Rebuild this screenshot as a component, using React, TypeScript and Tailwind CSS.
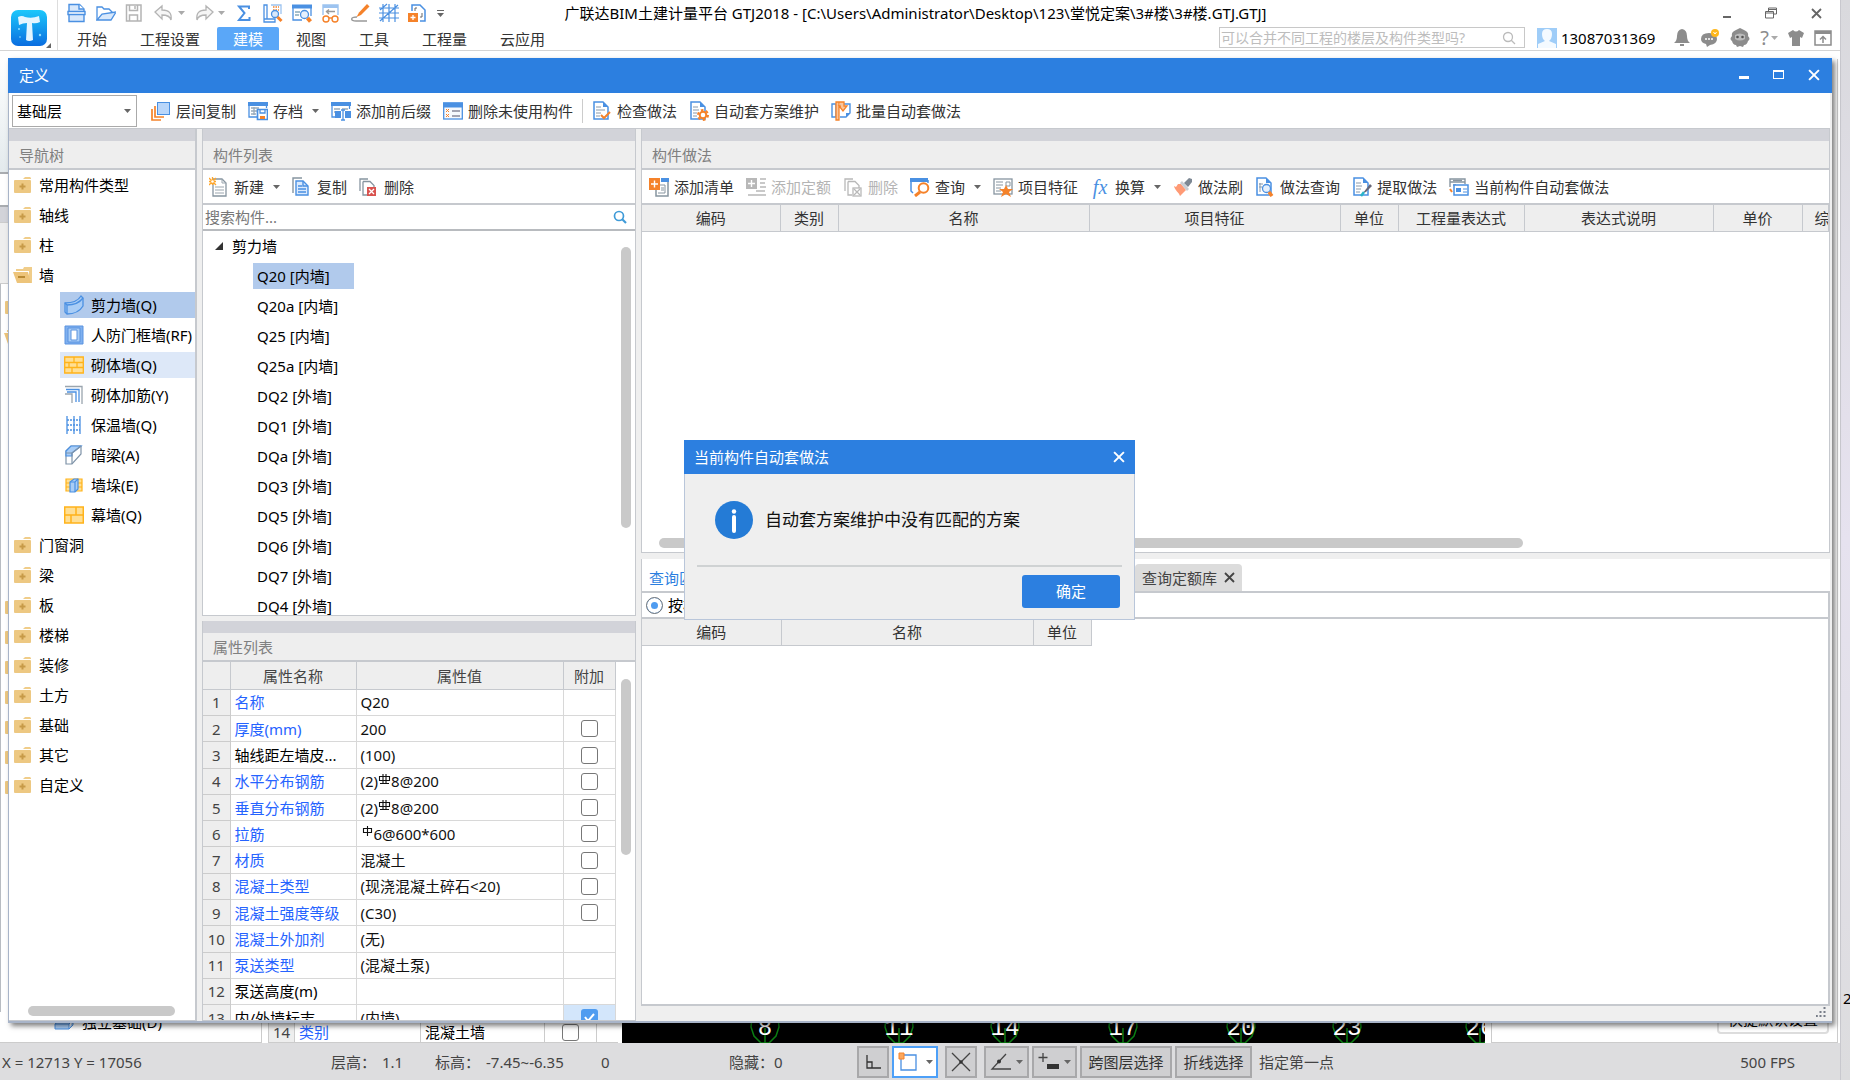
import type { ReactNode } from 'react'

const BLUE = '#4a90e2'
const ORANGE = '#f5822a'

const ICONS: Record<string, ReactNode> = {
  newFile: <g fill="#d8e8fb" stroke={BLUE} strokeWidth="1.4"><path d="M2 8V1.5h10.500L17 6v2M2 12v6.500h15V12" /><path d="M12 1.500V6h5M1 8.500h17v3H1z" fill="#fff" /></g>,
  open: <g fill="#d8e8fb" stroke={BLUE} strokeWidth="1.3"><path d="M1 17V4h5l2 2h5l4 4" fill="#fff" /><path d="M1 17l5-6 14-2-5 8z" /></g>,
  save: <g fill="none" stroke="#b4b4b4" strokeWidth="1.500"><path d="M1.500 2h14.500v16h-14.500z" /><path d="M4.500 2v5.500h8V2M10 3v3M4.500 18v-6h8v6" /></g>,
  undo: <path d="M1 9l7-6v4c7 0 10 3 9 10-1-4-4-5-9-5v4z" fill="#f6f6f6" stroke="#b4b4b4" strokeWidth="1.3" />,
  redo: <path d="M19 9l-7-6v4c-7 0-10 3-9 10 1-4 4-5 9-5v4z" fill="#f6f6f6" stroke="#b4b4b4" strokeWidth="1.3" />,
  sigma: <path d="M15 6V3.500H5l5.500 6.500L5 17h10.500v-3" fill="none" stroke={BLUE} strokeWidth="2" />,
  calcView: <g fill="none" stroke={BLUE} strokeWidth="1.300"><path d="M1 2h3v14H1zM4 16h8v3H1v-3" /><path d="M8 2h10v9" stroke="#9cc3f0" /><path d="M10 4h6M10 7h6" stroke={ORANGE} strokeDasharray="1.500 1" strokeWidth="1.500" /><circle cx="12" cy="11" r="3.500" fill="#d8e8fb" /><path d="M14.500 14l4 4" stroke={ORANGE} strokeWidth="3" /></g>,
  winFind: <g fill="none" stroke={BLUE} strokeWidth="1.300"><path d="M1 3v14h9M19 3v10" /><path d="M0 3.500h20" strokeWidth="4" /><path d="M3 9h5M3 12h4" stroke="#8ab" /><circle cx="12.500" cy="11.500" r="4" fill="#e6f0fc" /><path d="M15.500 15l3 3.500" stroke={ORANGE} strokeWidth="4" /></g>,
  glasses: <g fill="none" stroke="#9cc3f0" strokeWidth="1.400"><path d="M2 12V2h15v10" /><path d="M2 3.500h15" strokeWidth="3" /><path d="M5 8.500h9M8 6.500L5.500 8.500 8 11" stroke="#999" /><circle cx="5" cy="16" r="3" stroke={ORANGE} /><circle cx="14" cy="16" r="3" stroke={ORANGE} /><path d="M8 15h3" stroke={ORANGE} /></g>,
  pencil: <g><path d="M17 1l2.500 2.500L11 12l-4.500 2L9 9.500z" fill={ORANGE} /><path d="M7 14c-7 0-7 4-1 4h11" fill="none" stroke="#999" strokeWidth="1.300" /></g>,
  grid: <path d="M4 1v18M10 1v18M16 1v18M0 5h20M0 10h20M0 15h20M1 18L19 2M1 7L8 1" fill="none" stroke={BLUE} strokeWidth="1.200" />,
  pageAdd: <g><path d="M4 8V2h8l5 5v11h-5" fill="#fff" stroke={BLUE} strokeWidth="1.500" /><path d="M9 5H7v3M14 10v4h-2" stroke="#666" fill="none" /><rect y="10" width="10" height="9" fill={ORANGE} /><path d="M5 12v5M2.500 14.500h5" stroke="#fff" strokeWidth="1.300" /></g>,
  layers: <g><path d="M1 8v11h9M4 5v11h9" fill="none" stroke={ORANGE} strokeWidth="1.700" /><rect x="6.500" y="1.500" width="12" height="12" fill="#b9d6fa" stroke={BLUE} /></g>,
  archive: <g fill="none" stroke={BLUE} strokeWidth="1.300"><path d="M1 3v13h8M18.500 3v4" /><path d="M0 3h20" strokeWidth="4" /><path d="M3 7h8M3 10h6M3 13h5M6 6v8" stroke="#9ab" /><path d="M9.500 8.500h10v10h-10z" fill="#fff" strokeWidth="1.700" /><path d="M12 9v3h5V9" /><path d="M12 16.500h5" stroke={ORANGE} strokeWidth="3" /></g>,
  affix: <g fill="none" stroke={BLUE} strokeWidth="1.300"><path d="M1 3v13h3M18.500 3v5" /><path d="M0 3h20" strokeWidth="4" /><path d="M3 8h6M11 8h6M3 11h5" stroke="#9ab" /><path d="M4 10h6v7H4zM14 10h6v7h-6z" fill={BLUE} stroke="none" /><path d="M10 9h4M12 9v10M10 19h4" /></g>,
  unused: <g fill="none"><rect x=".7" y="2" width="18.600" height="16" fill="#f6f9fd" stroke={BLUE} strokeWidth="1.300" /><path d="M0 4h20" stroke={BLUE} strokeWidth="5" /><path d="M3 8l3 3M6 8l-3 3M3 13l3 3M6 13l-3 3" stroke={ORANGE} /><path d="M9 10h8M9 15h8" stroke="#889" strokeWidth="1.300" /></g>,
  check: <g fill="none"><path d="M2 1h9l5 5v12H2z" fill="#fff" stroke={BLUE} strokeWidth="1.500" /><path d="M11 1v5h5z" fill={BLUE} /><path d="M4 6h5M4 9h9M4 12h5M4 15h4" stroke="#89a" /><path d="M9 14l3 3 6-6" stroke={ORANGE} strokeWidth="2" /></g>,
  gear: <g fill="none"><path d="M2 1h9l5 5v12H2z" fill="#fff" stroke={BLUE} strokeWidth="1.500" /><path d="M11 1v5h5z" fill={BLUE} /><path d="M4 6h5M4 9h6M4 12h4M4 15h4" stroke="#89a" /><circle cx="14" cy="14" r="5" stroke={ORANGE} strokeWidth="2" strokeDasharray="2.600 2.600" /><circle cx="14" cy="14" r="3.300" fill="#fff" stroke={ORANGE} strokeWidth="2" /></g>,
  batch: <g fill="none"><path d="M1 3h4v13H1zM9 3h10v9l-4 4H9" fill="#fff" stroke={BLUE} strokeWidth="1.400" /><path d="M19 12h-4v4z" fill={BLUE} /><path d="M5 1h3v18H5zM8 1h5v4h3l-4 5-4-5h2" fill="#fbc49a" stroke={ORANGE} strokeWidth="1.300" /></g>,
  create: <g fill="none"><path d="M4 2h9l4 4v13H4z" fill="#fff" stroke="#8795a0" strokeWidth="1.300" /><path d="M13 2v4h4M6 10h9M6 13h9M6 16h9" stroke="#9aa5ae" /><path d="M0 1l7 7M7 1L0 8M3.500 0v8M0 4.500h7" stroke="#ffa62b" strokeWidth="1.300" /><circle cx="3.500" cy="4.500" r="1.300" fill="#fff" /></g>,
  copy: <g fill="none" strokeWidth="1.400"><path d="M1 16V1h9" stroke="#8795a0" /><path d="M4 4h7l5 5v9H4z" fill="#dbeafd" stroke={BLUE} /><path d="M11 4v5h5M6 9h4M6 12h8M6 15h8" stroke={BLUE} /></g>,
  remove: <g fill="none" strokeWidth="1.300"><path d="M1 14V2h8M4 4.500h7l4 4V11M4 4.500V18h4" stroke="#8795a0" /><rect x="8" y="10" width="9" height="9" fill="#d9534f" /><path d="M10 12l5 5M15 12l-5 5" stroke="#fff" /></g>,
  removeOff: <g fill="none" strokeWidth="1.300" stroke="#b8b8b8"><path d="M2 14V2h8M5 4.500h7l4 4V11M5 4.500V18h4" /><rect x="10" y="11" width="8" height="8" /><path d="M11 12l6 6M17 12l-6 6" /></g>,
  addList: <g fill="none"><path d="M19 4v15H7v-6" stroke="#8795a0" strokeWidth="1.500" /><path d="M12 3h8" stroke={BLUE} strokeWidth="4" /><path d="M11 8h5v8H9M12 11h3M12 13h3" stroke="#8795a0" /><rect width="11" height="12" y="1" fill={ORANGE} /><path d="M5.500 3.500v7M2 7h7" stroke="#fff" strokeWidth="1.400" /></g>,
  addQuota: <g fill="none"><path d="M14 2h6M14 6h5M14 10h6M10 14h8M2 18h18M14 14h5" stroke="#b8b8b8" strokeWidth="1.400" /><rect width="11" height="11" y="1" fill="#b8b8b8" /><path d="M5.500 3v7M2 6.500h7" stroke="#fff" strokeWidth="1.400" /></g>,
  query: <g fill="none"><path d="M1 3v11l2 2M18 3v3" stroke={BLUE} strokeWidth="1.500" /><path d="M0 3h18" stroke={BLUE} strokeWidth="4" /><circle cx="13.500" cy="11" r="4.800" fill="#fff" stroke={ORANGE} strokeWidth="2" /><path d="M10 15l-5 4" stroke={ORANGE} strokeWidth="3" /></g>,
  feature: <g fill="none"><rect x="1" y="2" width="18" height="15" fill="#fff" stroke="#8795a0" strokeWidth="1.300" /><path d="M3 5h7M3 8h7M3 11h5M3 14h5M13 5h4v4h-4z" stroke="#8795a0" /><path d="M13 8l2 4h5l-4 3 2 5-5-3-5 3 2-5-4-3h5z" fill={ORANGE} /></g>,
  brush: <g><path d="M1 9l2 1 2-3 3 0 5 6-6 6c-1-4-5-5-6-10z" fill="#ff9a75" /><path d="M7 6l2-2 7 8-2 2z" fill="#c9ced4" /><path d="M11 6l5-5 3 1 0 3-4 5z" fill="#7d8894" /></g>,
  docFind: <g fill="none"><path d="M2 1h9l5 5v12H2z" fill="#fff" stroke={BLUE} strokeWidth="1.500" /><path d="M11 1v5h5z" fill={BLUE} /><path d="M5 6v9M4 7h4M4 10h3" stroke="#89a" /><circle cx="11.500" cy="11.500" r="4" fill="#e6f0fc" stroke={BLUE} strokeWidth="1.300" /><path d="M14 15l3 4" stroke={ORANGE} strokeWidth="3.500" /></g>,
  docEdit: <g fill="none"><path d="M2 1h9l5 5v12H2z" fill="#fff" stroke={BLUE} strokeWidth="1.500" /><path d="M11 1v5h5z" fill={BLUE} /><path d="M4 6h5M4 9h6M4 12h5M4 15h4" stroke="#89a" /><path d="M18 7l2 2-6 6-3 1z" fill="#667" /><path d="M12 15l-3 4" stroke="#28b4c8" strokeWidth="2.500" /></g>,
  autoSet: <g fill="none"><path d="M1 10V2h15v5M1 5h15" stroke="#8795a0" strokeWidth="1.400" /><path d="M4 3.500h9M4 8h3" stroke="#8795a0" strokeWidth="1.300" /><path d="M5 8h14v10H5z" fill="#fff" stroke={BLUE} strokeWidth="1.500" /><path d="M7 11h5v4H7z" fill={BLUE} /><path d="M14 12h4M14 15h4" stroke={BLUE} /><path d="M1 12l2 3" stroke={ORANGE} strokeWidth="2" /></g>,
  shearWall: <g fill="#a9cdf6" stroke={BLUE} strokeWidth="1.300"><path d="M1 8c8 0 13-2 16-7l2 2v8c-3 5-8 8-16 8l-2-2z" /><path d="M1 8l2 2c8 0 13-3 16-7M3 10v9" fill="none" /></g>,
  doorFrame: <g fill="#7fb0ef" stroke="#5b93e0"><path d="M1 1h18v18H1z" /><path d="M4 3h12v14H4z" fill="#a9cdf6" /><path d="M7 5h6v10H7z" fill="#fff" /></g>,
  brick: <g stroke="#ffb31a" strokeWidth="1.300" fill="#ffdf94"><path d="M.7 2h18.600v16H.7z" /><path d="M1 7.500h18M1 12.500h18M10 2v5.500M5 7.500v5M13 7.500v5M8 12.500V18" /></g>,
  rebar: <g fill="none" strokeWidth="1.300"><path d="M1 1.500h17V19M1 9h7v9" stroke="#9aa5ae" /><path d="M2 4.500h13V17M3 7h9v10" stroke={BLUE} /></g>,
  insulate: <g fill="none" stroke={BLUE} strokeWidth="1.300"><path d="M3 1v18M10 1v18M16 1v18" /><path d="M3 5h13M3 10h13M3 15h13" strokeDasharray="2 1" /></g>,
  hiddenBeam: <g stroke="#7f93a8" strokeWidth="1.200" fill="#fff"><path d="M2 6l5-5h10v8L8 19H2z" /><path d="M2 6l5-5h10L8 8v3H2z" fill="#a9cdf6" stroke={BLUE} /><path d="M8 8v11M8 8l9-7M2 8h6" fill="none" /></g>,
  pier: <g stroke="#ffb31a" fill="#ffdf94" strokeWidth="1.200"><path d="M2 4h16v12H2zM2 8h16M2 12h16" /><path d="M6 7l4-3h4v10l-3 3H6z" fill="#a9cdf6" stroke={BLUE} /><path d="M11 7v10M6 7h5l3-3" fill="none" stroke={BLUE} /></g>,
  curtain: <g stroke="#ffb31a" strokeWidth="1.500" fill="#ffdf94"><path d="M.7 2h18.600v16H.7z" /><path d="M1 10h18M12 2v8M7 10v8" /></g>,
  footing: <g fill="#a9cdf6" stroke={BLUE}><path d="M1 12l5-4h13l-4 4zM1 12v5h14v-5M15 17l4-4V8M7 8V5h8v3" /></g>,
}

function Icon({ name }: { name: string }) {
  return (
    <svg viewBox="0 0 20 20" className="w-5 h-5 shrink-0" aria-hidden="true">
      {ICONS[name]}
    </svg>
  )
}

function Caret({ color = '#666' }: { color?: string }) {
  return (
    <svg viewBox="0 0 7 4" className="w-[7px] h-1 shrink-0" aria-hidden="true">
      <path d="M0 0h7L3.500 4z" fill={color} />
    </svg>
  )
}

function Cross({ size = 11 }: { size?: number }) {
  return (
    <svg viewBox="0 0 11 11" width={size} height={size} aria-hidden="true">
      <path d="M1 1l9 9M10 1l-9 9" stroke="currentColor" strokeWidth="1.800" />
    </svg>
  )
}

function Folder({ open }: { open?: boolean }) {
  return (
    <svg viewBox="0 0 20 18" className="w-5 h-[18px] shrink-0" aria-hidden="true">
      {open ? (
        <g>
          <path d="M3 5V3h7l1-2h8v16h-3V5z" fill="#f0cd8a" />
          <path d="M0 6h15l3 11H4z" fill="#edc47a" />
          <path d="M5 11h7" stroke="#b98a34" strokeWidth="2" />
        </g>
      ) : (
        <g>
          <path d="M10 3l2-2h5l1 1v1z" fill="#f0cd8a" />
          <rect x="1" y="4" width="17" height="13" rx="1" fill="#edc882" />
          <path d="M9.500 7.500v6M6.500 10.500h6" stroke="#c79a48" strokeWidth="2" />
        </g>
      )}
    </svg>
  )
}

interface ToolProps {
  icon: string
  label: string
  caret?: boolean
  off?: boolean
}

function Tool({ icon, label, caret, off }: ToolProps) {
  return (
    <button disabled={off} className={`flex items-center gap-[5px] h-7 px-1.5 whitespace-nowrap ${off ? 'text-[#b4b4b4]' : 'text-[#333]'}`}>
      {icon === 'fx' ? <i className="w-5 text-center text-xl font-['Liberation_Serif'] text-[#4a90e2]">fx</i> : <Icon name={icon} />}
      {label}
      {caret && <span className="pl-1"><Caret /></span>}
    </button>
  )
}

function PanelTitle({ children }: { children: string }) {
  return (
    <>
      <div className="h-3 shrink-0 bg-[#d2d3d9]" />
      <h2 className="h-[29px] shrink-0 flex items-center px-[10px] bg-[#eeeeee] border-b-2 border-[#c6c9ce] text-[#808080]">{children}</h2>
    </>
  )
}

const QUICK = [
  { icon: 'newFile', label: '新建' }, { icon: 'open', label: '打开' }, { icon: 'save', label: '保存' },
  { icon: 'undo', label: '撤销', caret: true }, { icon: 'redo', label: '恢复', caret: true },
  { icon: 'sigma', label: '汇总计算' }, { icon: 'calcView', label: '查看计算式' }, { icon: 'winFind', label: '查看工程量' },
  { icon: 'glasses', label: '查看报表' }, { icon: 'pencil', label: '绘制' }, { icon: 'grid', label: '轴网' }, { icon: 'pageAdd', label: '新建构件' },
]

const MENUS = ['开始', '工程设置', '建模', '视图', '工具', '工程量', '云应用']

const WALLS = [
  { icon: 'shearWall', label: '剪力墙(Q)' },
  { icon: 'doorFrame', label: '人防门框墙(RF)' },
  { icon: 'brick', label: '砌体墙(Q)' },
  { icon: 'rebar', label: '砌体加筋(Y)' },
  { icon: 'insulate', label: '保温墙(Q)' },
  { icon: 'hiddenBeam', label: '暗梁(A)' },
  { icon: 'pier', label: '墙垛(E)' },
  { icon: 'curtain', label: '幕墙(Q)' },
]

const GROUPS_TOP = ['常用构件类型', '轴线', '柱', '墙']
const GROUPS_BOTTOM = ['门窗洞', '梁', '板', '楼梯', '装修', '土方', '基础', '其它', '自定义']

const COMPONENTS = [
  'Q20 [内墙]', 'Q20a [内墙]', 'Q25 [内墙]', 'Q25a [内墙]', 'DQ2 [外墙]', 'DQ1 [外墙]',
  'DQa [外墙]', 'DQ3 [外墙]', 'DQ5 [外墙]', 'DQ6 [外墙]', 'DQ7 [外墙]', 'DQ4 [外墙]',
]

interface Prop {
  name: string
  value: ReactNode
  plain?: boolean
  box?: boolean
  on?: boolean
}

// Steel grade marks: plain bar (HPB300) and ribbed bar (HRB400)
function BarMark({ ribbed }: { ribbed?: boolean }) {
  return (
    <svg viewBox="0 0 13 13" className="inline w-[13px] h-[13px] -mt-2" aria-label={ribbed ? 'HRB400' : 'HPB300'}>
      <path d={ribbed ? 'M1.500 3.500h10v4h-10zM2 10.500h9M5 1v9M8 1v9' : 'M2.500 3.500h8v4h-8zM6.500 1v10'} fill="none" stroke="#111" strokeWidth="1.100" />
    </svg>
  )
}

const PROPS: Prop[] = [
  { name: '名称', value: 'Q20' },
  { name: '厚度(mm)', value: '200', box: true },
  { name: '轴线距左墙皮...', value: '(100)', plain: true, box: true },
  { name: '水平分布钢筋', value: <>(2)<BarMark ribbed />8@200</>, box: true },
  { name: '垂直分布钢筋', value: <>(2)<BarMark ribbed />8@200</>, box: true },
  { name: '拉筋', value: <><BarMark />6@600*600</>, box: true },
  { name: '材质', value: '混凝土', box: true },
  { name: '混凝土类型', value: '(现浇混凝土碎石<20)', box: true },
  { name: '混凝土强度等级', value: '(C30)', box: true },
  { name: '混凝土外加剂', value: '(无)' },
  { name: '泵送类型', value: '(混凝土泵)' },
  { name: '泵送高度(m)', value: '', plain: true },
  { name: '内/外墙标志', value: '(内墙)', plain: true, box: true, on: true },
]

const AXES = [
  { n: '8', x: 143 }, { n: '11', x: 277 }, { n: '14', x: 383 }, { n: '17', x: 501 },
  { n: '20', x: 619 }, { n: '23', x: 725 }, { n: '26', x: 858 },
]

const TABS = ['查询匹配清单', '查询匹配定额', '查询外部清单', '查询清单库', '查询定额库']

const BOX = 'appearance-none block mx-auto size-[17px] rounded-[3px] border border-[#777] bg-white'

function AppHeader() {
  return (
    <header className="flex shrink-0 h-[51px] bg-white border-b border-[#d4d4d4]">
      <div className="relative w-[58px] shrink-0 border-r border-[#ddd] pl-[11px] pt-[10px]">
        <svg viewBox="0 0 36 36" className="w-9 h-9" aria-label="GTJ">
          <defs>
            <linearGradient id="logo" x1="0" y1="0" x2="0" y2="1">
              <stop offset="0" stopColor="#1cc8fb" />
              <stop offset="1" stopColor="#0a6de0" />
            </linearGradient>
          </defs>
          <rect width="36" height="36" rx="7" fill="url(#logo)" />
          <path d="M7 7q4-2 7 0 7 2 14-1l1 6q-4 2-8 1l1 17q-4 2-7 0l1-17q-4 0-8 2z" fill="#e4f5ff" />
          <g fill="#8fdcff"><circle cx="8" cy="19" r="1" /><circle cx="29" cy="25" r="1.200" /><circle cx="9" cy="27" r=".8" /></g>
        </svg>
        <svg viewBox="0 0 5 5" className="absolute right-1.5 bottom-0.5 w-[5px] h-[5px]" aria-hidden="true"><path d="M5 0v5H0z" fill="#666" /></svg>
      </div>

      <div className="flex-1 min-w-0 flex flex-col justify-between">
        <div className="flex items-center h-[26px]">
          <div className="flex-1 flex items-center gap-[9px] pl-[9px]">
            {QUICK.map(q => (
              <button key={q.label} aria-label={q.label} className="flex items-center gap-1">
                <Icon name={q.icon} />
                {q.caret && <Caret color="#aaa" />}
              </button>
            ))}
            <button aria-label="更多" className="flex flex-col items-center gap-0.5">
              <span className="w-[7px] h-px bg-[#666]" />
              <Caret />
            </button>
          </div>
          <h1 className="text-black whitespace-nowrap">广联达BIM土建计量平台 GTJ2018 - [C:\Users\Administrator\Desktop\123\堂悦定案\3#楼\3#楼.GTJ.GTJ]</h1>
          <div className="flex-1 ml-[58px] pr-[18px] flex justify-end items-center gap-[34px] text-[#666]">
            <button aria-label="最小化" className="w-2 h-1 pt-1.5"><span className="block w-2 h-[2px] bg-[#666]" /></button>
            <button aria-label="还原">
              <svg viewBox="0 0 12 12" className="w-3 h-3"><path d="M3.500 4V1h8v6h-3M.5 4.500h8v6.500h-8zM.5 6h8M3.500 2.500h8" fill="none" stroke="#666" /></svg>
            </button>
            <button aria-label="关闭"><Cross /></button>
          </div>
        </div>

        <div className="flex items-end justify-between">
          <nav className="flex gap-px pl-[3px]">
            {MENUS.map(m => (
              <button key={m} className={`h-[23px] px-4 rounded-t-xs ${m === '建模' ? 'bg-[#5aa7f8] text-white' : 'text-[#333]'}`}>{m}</button>
            ))}
          </nav>
          <div className="flex items-center pr-2 pb-0.5">
            <label className="flex items-center w-[306px] h-[21px] border border-[#c8c8c8] pr-2">
              <input aria-label="搜索" placeholder="可以合并不同工程的楼层及构件类型吗?" className="flex-1 min-w-0 px-px outline-none placeholder:text-[#bdbdbd] text-sm" />
              <svg viewBox="0 0 14 14" className="w-3.5 h-3.5"><g fill="none" stroke="#bbb" strokeWidth="1.300"><circle cx="6" cy="6" r="4.500" /><path d="M9 9l4 4" /></g></svg>
            </label>
            <svg viewBox="0 0 20 20" className="w-5 h-5 ml-3" aria-hidden="true">
              <rect width="20" height="20" fill="#9fcdf8" />
              <path d="M5 6q0-5 5-5t5 5q0 5-3 7l7 3v4H1v-4l7-3Q5 11 5 6z" fill="#f4faff" />
            </svg>
            <span className="ml-1 text-black">13087031369</span>
            <div className="flex items-center gap-[10px] ml-[19px] text-[#8c8c8c]">
              <svg viewBox="0 0 16 18" className="w-4 h-[18px]"><path d="M8 0q5 1 5 7 0 5 3 7H0q3-2 3-7 0-6 5-7zM6 15h4v2H6z" fill="currentColor" /></svg>
              <svg viewBox="0 0 20 18" className="w-5 h-[18px]"><path d="M9 4q8 0 8 6 0 5-7 6l-3 2-1-3q-5-1-5-5 0-6 8-6z" fill="currentColor" /><path d="M5 10h2M8 10h2M11 10h2" stroke="#fff" strokeWidth="1.500" /><circle cx="15" cy="4" r="4" fill="#ffb81c" /><path d="M13.500 3l1.500 2 1.500-2" stroke="#fff" fill="none" /></svg>
              <svg viewBox="0 0 20 20" className="w-5 h-5"><path d="M10 0l4 2q5 2 4 6 3 3 0 5-1 4-4 4l-1 2-3-1-3 1-1-2q-3 0-4-4-3-2 0-5-1-4 4-6z" fill="currentColor" /><path d="M5 7q5-3 10 0v4q-5 3-10 0z" fill="#bbb" /><circle cx="7.500" cy="9" r="1.300" fill="#555" /><circle cx="12.500" cy="9" r="1.300" fill="#555" /></svg>
              <button aria-label="帮助" className="flex items-center gap-0.5 text-xl/5">?<Caret color="#aaa" /></button>
              <svg viewBox="0 0 16 16" className="w-4 h-4"><path d="M5 0q3 3 6 0l5 3-2 5-2-1v9H4V7L2 8 0 3z" fill="currentColor" /></svg>
              <svg viewBox="0 0 18 16" className="w-[18px] h-4"><path d="M1 1h16v14H1z" fill="none" stroke="currentColor" strokeWidth="1.500" /><path d="M1 2.500h16" stroke="currentColor" strokeWidth="3" /><path d="M9 13V7M6 9.500L9 6.500l3 3" fill="none" stroke="currentColor" strokeWidth="1.500" /></svg>
            </div>
          </div>
        </div>
      </div>
    </header>
  )
}

// Main window content that shows around the edges of the definition window
function Backdrop() {
  return (
    <div className="flex h-full pt-2 bg-white overflow-hidden">
      <div className="w-[262px] shrink-0 flex flex-col bg-white border-r border-b border-[#ccc]">
        <div className="h-[113px] shrink-0 bg-linear-to-b from-white to-[#e3eaed]" />
        <div className="h-[35px] shrink-0 border-y-2 border-[#a9acb0] bg-white" />
        <div className="h-[15px] shrink-0 bg-[#d2d3d9]" />
        <div className="h-[62px] shrink-0 border-y border-[#ccc] bg-[#eee]" />
        <div className="flex-1 min-h-0 pl-[3px] pt-[7px] border-l border-[#b8bcc2] overflow-hidden">
          {Array.from({ length: 17 }, (_, i) => (
            <div key={i} className="h-[30px] flex items-center">
              {(i === 0 || i > 9) && <Folder />}
              {i === 1 && <Folder open />}
            </div>
          ))}
        </div>
        <div className="h-[30px] shrink-0 flex items-center gap-2 pl-[54px] pb-2.5 text-black">
          <Icon name="footing" />独立基础(D)
        </div>
      </div>
      <div className="w-[360px] shrink-0 flex flex-col justify-end pl-1.5 pr-1">
        <div className="flex items-end h-[22px] bg-white border-b border-[#ccc] text-black">
          <span className="w-[27px] bg-[#eee] text-center text-[#444] border-x border-[#ccc]">14</span>
          <span className="w-[126px] pl-1 text-[#2563ff] border-r border-[#ccc]">类别</span>
          <span className="w-[124px] pl-1 border-r border-[#ccc]">混凝土墙</span>
          <span className="w-[52px] pb-px border-r border-[#ccc]"><input type="checkbox" aria-label="类别附加" className={BOX} /></span>
        </div>
      </div>
      <div className="relative w-[863px] shrink-0 bg-black overflow-hidden">
        {AXES.map(a => (
          <div key={a.n} className="absolute -bottom-px flex justify-center w-[30px] h-[36px] -ml-[15px]" style={{ left: a.x }}>
            <svg viewBox="0 0 30 36" className="absolute inset-0" aria-hidden="true"><path d="M9 2h12l7 7 1 10-3 9-7 7h-8l-7-7-3-9L2 9zM15 20v16" fill="none" stroke="#0b7d12" strokeWidth="1.500" /></svg>
            <span className="relative text-2xl/5 pt-[11px] text-white font-['Liberation_Mono']">{a.n}</span>
          </div>
        ))}
      </div>
      <div className="flex-1 ml-1.5 mr-0.5 flex items-end justify-end bg-white border-x border-b border-[#ccc] pb-2 pr-2">
        <button className="w-[112px] h-[30px] text-black border-2 border-[#ddd] rounded-sm">快捷默认设置</button>
      </div>
    </div>
  )
}

function NavTree() {
  return (
    <section className="w-[188px] shrink-0 flex flex-col bg-white border-r-2 border-b border-[#c6c9ce]">
      <PanelTitle>导航树</PanelTitle>
      <ul className="flex-1 min-h-0 text-black whitespace-nowrap overflow-hidden">
        {GROUPS_TOP.map(g => (
          <li key={g} className="flex items-center gap-1.5 h-[30px] pl-1"><Folder open={g === '墙'} />{g}</li>
        ))}
        {WALLS.map((w, i) => (
          <li key={w.label} className="flex items-center h-[30px] pl-[51px]">
            <span className={`flex-1 flex items-center gap-[7px] h-[26px] pl-1 ${i === 0 ? 'bg-[#b1caec]' : i === 2 ? 'bg-[#dde8f8]' : ''}`}>
              <Icon name={w.icon} />{w.label}
            </span>
          </li>
        ))}
        {GROUPS_BOTTOM.map(g => (
          <li key={g} className="flex items-center gap-1.5 h-[30px] pl-1"><Folder />{g}</li>
        ))}
      </ul>
      <div className="shrink-0 ml-[19px] mb-1 w-[147px] h-[10px] rounded-full bg-[#c9c9c9]" />
    </section>
  )
}

function ComponentList() {
  return (
    <section className="grow-[488] basis-0 min-h-0 flex flex-col bg-white border-x border-b border-[#c6c9ce]">
      <PanelTitle>构件列表</PanelTitle>
      <div className="flex items-center shrink-0 h-[35px] border-b-2 border-[#c6c9ce]">
        <Tool icon="create" label="新建" caret />
        <Tool icon="copy" label="复制" />
        <Tool icon="remove" label="删除" />
      </div>
      <label className="flex items-center shrink-0 h-[26px] border-b-2 border-[#b8bbbf] pr-2">
        <input aria-label="搜索构件" placeholder="搜索构件..." className="flex-1 min-w-0 px-0.5 outline-none placeholder:text-[#777]" />
        <svg viewBox="0 0 14 14" className="w-3.5 h-3.5"><g fill="none" stroke="#3f9bd8" strokeWidth="1.700"><circle cx="6" cy="6" r="4.500" /><path d="M9 9l4 4" strokeWidth="2.200" /></g></svg>
      </label>
      <div className="flex-1 min-h-0 flex overflow-hidden">
        <ul className="flex-1 text-black">
          <li className="flex items-center gap-[9px] h-[30px] pl-3">
            <svg viewBox="0 0 8 8" className="w-2 h-2" aria-hidden="true"><path d="M8 0v8H0z" fill="#333" /></svg>
            剪力墙
          </li>
          {COMPONENTS.map((c, i) => (
            <li key={c} className="flex items-center h-[30px] pl-[50px]">
              <span className={`h-[26px] leading-[26px] pl-1 ${i === 0 ? 'w-[101px] bg-[#b1caec]' : ''}`}>{c}</span>
            </li>
          ))}
        </ul>
        <div className="w-[10px] h-[281px] mt-4 mr-1 rounded-full bg-[#c9c9c9]" />
      </div>
    </section>
  )
}

function PropertyList() {
  return (
    <section className="grow-[400] basis-0 min-h-0 flex flex-col bg-white border-x border-b border-[#c6c9ce]">
      <PanelTitle>属性列表</PanelTitle>
      <div className="flex-1 min-h-0 flex overflow-hidden justify-between">
        <table className="h-[369px] w-[412px] shrink-0 table-fixed border-collapse">
          <thead>
            <tr className="h-[27px] bg-[#eee] text-[#444]">
              <th className="w-[27px] border-r border-b border-[#c6c9ce]" />
              <th className="w-[126px] font-normal border-r border-b border-[#c6c9ce]">属性名称</th>
              <th className="w-[207px] font-normal border-r border-b border-[#c6c9ce]">属性值</th>
              <th className="w-[52px] font-normal border-r border-b border-[#c6c9ce]">附加</th>
            </tr>
          </thead>
          <tbody>
            {PROPS.map((p, i) => (
              <tr key={p.name} className="h-[26px] whitespace-nowrap">
                <td className="bg-[#eee] text-center text-[#444] border-r border-b border-[#ccc]">{i + 1}</td>
                <td className={`pl-1 border-r border-b border-[#d8d8d8] ${p.plain ? 'text-black' : 'text-[#2563ff]'}`}>{p.name}</td>
                <td className="pl-1 text-[#111] border-r border-b border-[#d8d8d8]">{p.value}</td>
                <td className={`border-r border-b border-[#d8d8d8] ${p.on ? 'bg-[#d3e6fb]' : ''}`}>
                  {p.box && !p.on && <input type="checkbox" aria-label={p.name} className={BOX} />}
                  {p.on && (
                    <label className="relative block mx-auto size-[17px]">
                      <input type="checkbox" aria-label={p.name} defaultChecked className="appearance-none block size-[17px] rounded-[3px] bg-[#4f9cf0]" />
                      <svg viewBox="0 0 17 17" className="absolute inset-0"><path d="M4 8l3 4 6-7" fill="none" stroke="#fff" strokeWidth="2" /></svg>
                    </label>
                  )}
                </td>
              </tr>
            ))}
          </tbody>
        </table>
        <div className="w-[10px] h-[176px] mt-[17px] mr-1 rounded-full bg-[#c9c9c9]" />
      </div>
    </section>
  )
}

const TH = 'font-normal border-r border-b border-[#c6c9ce] overflow-hidden whitespace-nowrap'

function MethodPanel() {
  return (
    <section className="grow-[425] basis-0 min-h-0 flex flex-col bg-white border-x border-b border-[#c6c9ce]">
      <PanelTitle>构件做法</PanelTitle>
      <div className="flex items-center shrink-0 h-[35px] pl-px border-b-2 border-[#c6c9ce]">
        <Tool icon="addList" label="添加清单" />
        <Tool icon="addQuota" label="添加定额" off />
        <Tool icon="removeOff" label="删除" off />
        <Tool icon="query" label="查询" caret />
        <Tool icon="feature" label="项目特征" />
        <Tool icon="fx" label="换算" caret />
        <Tool icon="brush" label="做法刷" />
        <Tool icon="docFind" label="做法查询" />
        <Tool icon="docEdit" label="提取做法" />
        <Tool icon="autoSet" label="当前构件自动套做法" />
      </div>
      <table className="w-full table-fixed border-collapse">
        <thead>
          <tr className="h-[26px] bg-[#eee] text-[#333]">
            <th className={`${TH} w-[138px]`}>编码</th>
            <th className={`${TH} w-[58px]`}>类别</th>
            <th className={`${TH} w-[251px]`}>名称</th>
            <th className={`${TH} w-[251px]`}>项目特征</th>
            <th className={`${TH} w-[58px]`}>单位</th>
            <th className={`${TH} w-[126px]`}>工程量表达式</th>
            <th className={`${TH} w-[189px]`}>表达式说明</th>
            <th className={`${TH} w-[89px]`}>单价</th>
            <th className={`${TH} pl-3 text-left text-clip`}>综</th>
          </tr>
        </thead>
      </table>
      <div className="mt-auto mb-1 ml-[17px] w-[864px] h-[10px] rounded-full bg-[#c9c9c9]" />
    </section>
  )
}

function QueryPanel() {
  return (
    <section className="grow-[447] basis-0 min-h-0 flex flex-col bg-white border-l border-[#c6c9ce] border-b-2">
      <div className="flex items-end gap-[5px] shrink-0 h-8">
        {TABS.map((t, i) => (
          <button key={t} className={`flex items-center gap-[7px] h-[27px] px-[7px] rounded-t-sm whitespace-nowrap ${i === 0 ? 'bg-white text-[#2c7fe0]' : 'bg-[#dcdcdc] text-[#444]'}`}>
            {t}<Cross size={11} />
          </button>
        ))}
      </div>
      <div className="flex items-center shrink-0 h-7 pl-1 border-y-2 border-r-2 border-[#c6c9ce]">
        <label className="flex items-center gap-[5px] text-black">
          <input type="radio" name="scope" defaultChecked className="appearance-none size-[17px] rounded-full border border-[#777] bg-[#4f9cf0] shadow-[inset_0_0_0_4px_#fff]" />
          按构件类型过滤
        </label>
      </div>
      <div className="flex-1 border-r-2 border-[#c6c9ce]">
        <table className="w-[449px] table-fixed border-collapse">
          <thead>
            <tr className="h-[26px] bg-[#eee] text-[#333]">
              <th className={`${TH} w-[139px]`}>编码</th>
              <th className={`${TH} w-[252px]`}>名称</th>
              <th className={`${TH} w-[58px]`}>单位</th>
            </tr>
          </thead>
        </table>
      </div>
    </section>
  )
}

function MessageBox() {
  return (
    <div role="dialog" aria-label="当前构件自动套做法" className="absolute left-[675px] top-[382px] w-[451px] h-[180px] flex flex-col bg-[#efefef] border border-[#b9c6da]">
      <div className="-mx-px -mt-px h-[34px] shrink-0 flex items-center justify-between px-[10px] bg-[#2c7fe0] text-white">
        当前构件自动套做法
        <button aria-label="关闭"><Cross size={12} /></button>
      </div>
      <div className="flex-1 flex items-center gap-3 mx-3 px-[18px] border-b-2 border-[#cfd2d3] text-[17px] text-[#111]">
        <svg viewBox="0 0 38 38" className="w-[38px] h-[38px]" aria-hidden="true">
          <circle cx="19" cy="19" r="19" fill="#247bd6" />
          <circle cx="19" cy="10.500" r="2.200" fill="#fff" />
          <path d="M19 16v14" stroke="#fff" strokeWidth="4" strokeLinecap="round" />
        </svg>
        自动套方案维护中没有匹配的方案
      </div>
      <div className="h-[52px] shrink-0 flex justify-end items-center pr-3.5 pb-1">
        <button className="w-[98px] h-[33px] rounded-[3px] bg-[#2c7fe0] text-white">确定</button>
      </div>
    </div>
  )
}

function DefineWindow() {
  return (
    <div className="absolute left-2 right-2 top-[7px] bottom-5 flex flex-col bg-[#efefef] border-l border-b-2 border-[#a8b4c8] shadow-[3px_3px_5px_rgba(0,0,0,0.5)]">
      <div className="-ml-px h-[35px] shrink-0 flex items-center justify-between pl-[11px] pr-3 pb-0.5 bg-[#2c7fe0] text-white">
        定义
        <div className="flex items-center gap-6">
          <button aria-label="最小化" className="pt-1.5"><span className="block w-[10px] h-[3px] bg-white" /></button>
          <button aria-label="最大化"><span className="block w-[11px] h-[9px] border border-t-2 border-white" /></button>
          <button aria-label="关闭"><Cross size={12} /></button>
        </div>
      </div>

      <div className="h-9 shrink-0 flex items-center pl-[3px] mr-0.5 bg-white border-b border-[#c6c9ce]">
        <div className="relative flex items-center mr-2">
          <select aria-label="楼层" className="appearance-none w-[125px] h-8 pl-1 border border-[#aaa] bg-white text-black">
            <option>基础层</option>
          </select>
          <span className="absolute right-1.5 flex"><Caret /></span>
        </div>
        <Tool icon="layers" label="层间复制" />
        <Tool icon="archive" label="存档" caret />
        <Tool icon="affix" label="添加前后缀" />
        <Tool icon="unused" label="删除未使用构件" />
        <span className="w-px h-6 mx-[3px] bg-[#ccc]" />
        <Tool icon="check" label="检查做法" />
        <Tool icon="gear" label="自动套方案维护" />
        <Tool icon="batch" label="批量自动套做法" />
      </div>

      <div className="flex-1 min-h-0 flex gap-[5px]">
        <NavTree />
        <div className="w-[434px] shrink-0 flex flex-col gap-[5px]">
          <ComponentList />
          <PropertyList />
        </div>
        <div className="flex-1 min-w-0 flex flex-col gap-1.5 mr-0.5">
          <MethodPanel />
          <QueryPanel />
          <div className="-mt-1.5 h-[15px] shrink-0 flex justify-end items-end pb-1 pr-1">
            <svg viewBox="0 0 10 10" className="w-[10px] h-[10px]" aria-hidden="true">
              <path d="M8.500 0v2M8.500 4v2M8.500 8v2M4.500 4v2M4.500 8v2M.8 8v2" stroke="#777d88" strokeWidth="2" />
            </svg>
          </div>
        </div>
      </div>

      <MessageBox />
    </div>
  )
}

const SBTN = 'flex items-center justify-center gap-1 h-8 border-2 border-[#a8a8aa] bg-[#cfcfd1] text-[#333]'

function StatusBar() {
  return (
    <footer className="shrink-0 h-[37px] flex items-center px-0.5 bg-[#dddddf] text-[#444] whitespace-nowrap">
      <span className="w-[329px]">X = 12713 Y = 17056</span>
      <span className="w-[51px]">层高：</span>
      <span className="w-[53px]">1.1</span>
      <span className="w-[51px]">标高：</span>
      <span className="w-[115px]">-7.45~-6.35</span>
      <span className="w-32">0</span>
      <span className="w-[128px]">隐藏：0</span>
      <div className="flex items-center gap-[3px]">
        <button aria-label="正交" className={`${SBTN} w-8`}>
          <svg viewBox="0 0 18 18" className="w-[18px] h-[18px]"><path d="M3 2v13h14M3 9h5v6" fill="none" stroke="#333" strokeWidth="1.300" /></svg>
        </button>
        <button aria-label="捕捉" className="flex items-center justify-center gap-2 w-[46px] h-8 border-2 border-[#4da0f8] bg-white">
          <svg viewBox="0 0 20 20" className="w-5 h-5"><path d="M3 3h15v15H3z" fill="#fff" stroke={BLUE} strokeWidth="1.300" /><path d="M1 1h5v6H1z" fill="#fba85f" stroke={ORANGE} /></svg>
          <Caret />
        </button>
        <button aria-label="交点" className={`${SBTN} w-8 ml-1`}>
          <svg viewBox="0 0 20 20" className="w-5 h-5"><path d="M1 1l18 18M19 1L1 19" stroke="#444" strokeWidth="1.300" /><circle cx="10" cy="10" r="1.800" fill="#333" /></svg>
        </button>
        <button aria-label="角度" className={`${SBTN} w-[45px] ml-1`}>
          <svg viewBox="0 0 22 18" className="w-[22px] h-[18px]"><path d="M16 1L2 16h19" fill="none" stroke="#444" strokeWidth="1.300" /><circle cx="9" cy="8.500" r="2" fill="#333" /></svg>
          <Caret />
        </button>
        <button aria-label="动态输入" className={`${SBTN} w-[45px]`}>
          <svg viewBox="0 0 22 18" className="w-[22px] h-[18px]"><path d="M5 0v9M.5 4.500h9" stroke="#444" strokeWidth="1.300" /><path d="M9 11h12v5H9z" fill="#333" /></svg>
          <Caret />
        </button>
        <button className={`${SBTN} w-[92px]`}>跨图层选择</button>
        <button className={`${SBTN} w-[77px]`}>折线选择</button>
      </div>
      <span className="ml-[7px]">指定第一点</span>
      <span className="ml-auto pr-[43px]">500 FPS</span>
    </footer>
  )
}

export default function App() {
  return (
    <div className="flex w-full h-screen overflow-hidden text-[15px] leading-5 font-['Noto_Sans','Noto_Sans_CJK_SC',sans-serif]">
      <div className="flex-1 min-w-0 flex flex-col">
        <AppHeader />
        <main className="relative flex-1 min-h-0">
          <Backdrop />
          <DefineWindow />
        </main>
        <StatusBar />
      </div>
      <aside className="w-[10px] shrink-0 overflow-hidden pt-[988px] pl-0.5 border-l border-[#c8c8ce] bg-linear-to-b from-[#d9d9dd] via-[#e6e2ef] to-[#dcdcde] text-black">2</aside>
    </div>
  )
}
